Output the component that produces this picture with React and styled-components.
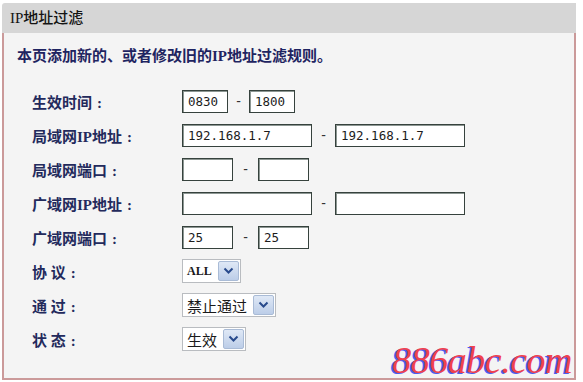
import styled, { createGlobalStyle } from "styled-components";

const Global = createGlobalStyle`
  html, body {
    margin: 0;
    background: #ffffff;
  }
  body {
    font-family: "Liberation Serif", "Noto Sans CJK SC", serif;
  }
`;

const Panel = styled.section`
  position: relative;
  width: 574px;
  margin: 3px 0 0 2px;
`;

const Head = styled.header`
  height: 30px;
  line-height: 30px;
  padding-left: 8px;
  background-color: #d6d6d6;
  border-top-left-radius: 3px;
  font-size: 15px;
  font-weight: 500;
  color: #141414;
`;

const Body = styled.div`
  height: 347px;
  box-sizing: border-box;
  border: 2px solid #cb9a9a;
  border-top: none;
  background-color: #f4f4f4;
  padding: 13px 0 0 13px;
`;

const Intro = styled.p`
  margin: 0;
  height: 20px;
  line-height: 20px;
  font-size: 15px;
  font-weight: 700;
  color: #1f2461;
`;

const Form = styled.div`
  display: grid;
  grid-template-columns: 150px auto;
  grid-auto-rows: 34px;
  align-items: center;
  margin: 18px 0 0 15px;
`;

const Label = styled.div`
  font-size: 15px;
  font-weight: 600;
  color: #232a5c;
  white-space: pre;
`;

const Colon = styled.span`
  padding-left: 5px;
`;

const Field = styled.div`
  display: flex;
  align-items: center;
`;

const Box = styled.div`
  width: ${(p) => p.$w}px;
  height: 23px;
  box-sizing: border-box;
  border: 1px solid #36423d;
  box-shadow: inset 1px 1px 0 #8d9793;
  background: #ffffff;
  padding-left: 5px;
  font-family: "DejaVu Sans Mono", monospace;
  font-size: 12.5px;
  line-height: 21px;
  color: #1c1c1c;
`;

const Dash = styled.span`
  width: ${(p) => p.$w}px;
  text-align: center;
  font-family: "Liberation Sans", sans-serif;
  font-size: 14px;
  color: #333;
`;

const Select = styled.div`
  display: flex;
  align-items: center;
  height: 24px;
  box-sizing: border-box;
  border: 1px solid #b9bcc0;
  background: #ffffff;
  padding: 0 1px 0 4px;
`;

const SelectText = styled.span`
  font-size: ${(p) => (p.$latin ? "12px" : "15px")};
  font-weight: ${(p) => (p.$latin ? 700 : 400)};
  color: #1a1a1a;
  margin-right: 6px;
`;

const Arrow = styled.span`
  display: flex;
  align-items: center;
  justify-content: center;
  width: 21px;
  height: 20px;
  box-sizing: border-box;
  border: 1px solid #a9bbd6;
  border-radius: 2px;
  background: linear-gradient(#dfe8f6, #bccde8);
`;

const Mark = styled.div`
  position: absolute;
  right: 4px;
  bottom: 1px;
  font-family: "Liberation Serif", serif;
  font-style: italic;
  font-size: 38px;
  line-height: 38px;
  color: #f0414f;
  text-shadow: -2px 1px 0 #4b5cf2;
  letter-spacing: -0.5px;
`;

const Chevron = () => (
  <svg width="11" height="8" viewBox="0 0 11 8">
    <path d="M1.5 1.5 L5.5 5.5 L9.5 1.5" fill="none" stroke="#284a8c" strokeWidth="2" />
  </svg>
);

const Name = ({ children }) => (
  <Label>
    {children}
    <Colon>:</Colon>
  </Label>
);

const Pair = ({ a, b, w, gap }) => (
  <Field>
    <Box $w={w}>{a}</Box>
    <Dash $w={gap}>-</Dash>
    <Box $w={w}>{b}</Box>
  </Field>
);

const Drop = ({ value, latin }) => (
  <Field>
    <Select>
      <SelectText $latin={latin}>{value}</SelectText>
      <Arrow>
        <Chevron />
      </Arrow>
    </Select>
  </Field>
);

export default function App() {
  return (
    <>
      <Global />
      <Panel>
        <Head>IP地址过滤</Head>
        <Body>
          <Intro>本页添加新的、或者修改旧的IP地址过滤规则。</Intro>
          <Form>
            <Name>生效时间</Name>
            <Pair a="0830" b="1800" w={46} gap={21} />
            <Name>局域网IP地址</Name>
            <Pair a="192.168.1.7" b="192.168.1.7" w={130} gap={23} />
            <Name>局域网端口</Name>
            <Pair a="" b="" w={51} gap={25} />
            <Name>广域网IP地址</Name>
            <Pair a="" b="" w={130} gap={23} />
            <Name>广域网端口</Name>
            <Pair a="25" b="25" w={51} gap={25} />
            <Name>协 议</Name>
            <Drop value="ALL" latin />
            <Name>通 过</Name>
            <Drop value="禁止通过" />
            <Name>状 态</Name>
            <Drop value="生效" />
          </Form>
        </Body>
        <Mark>886abc.com</Mark>
      </Panel>
    </>
  );
}
